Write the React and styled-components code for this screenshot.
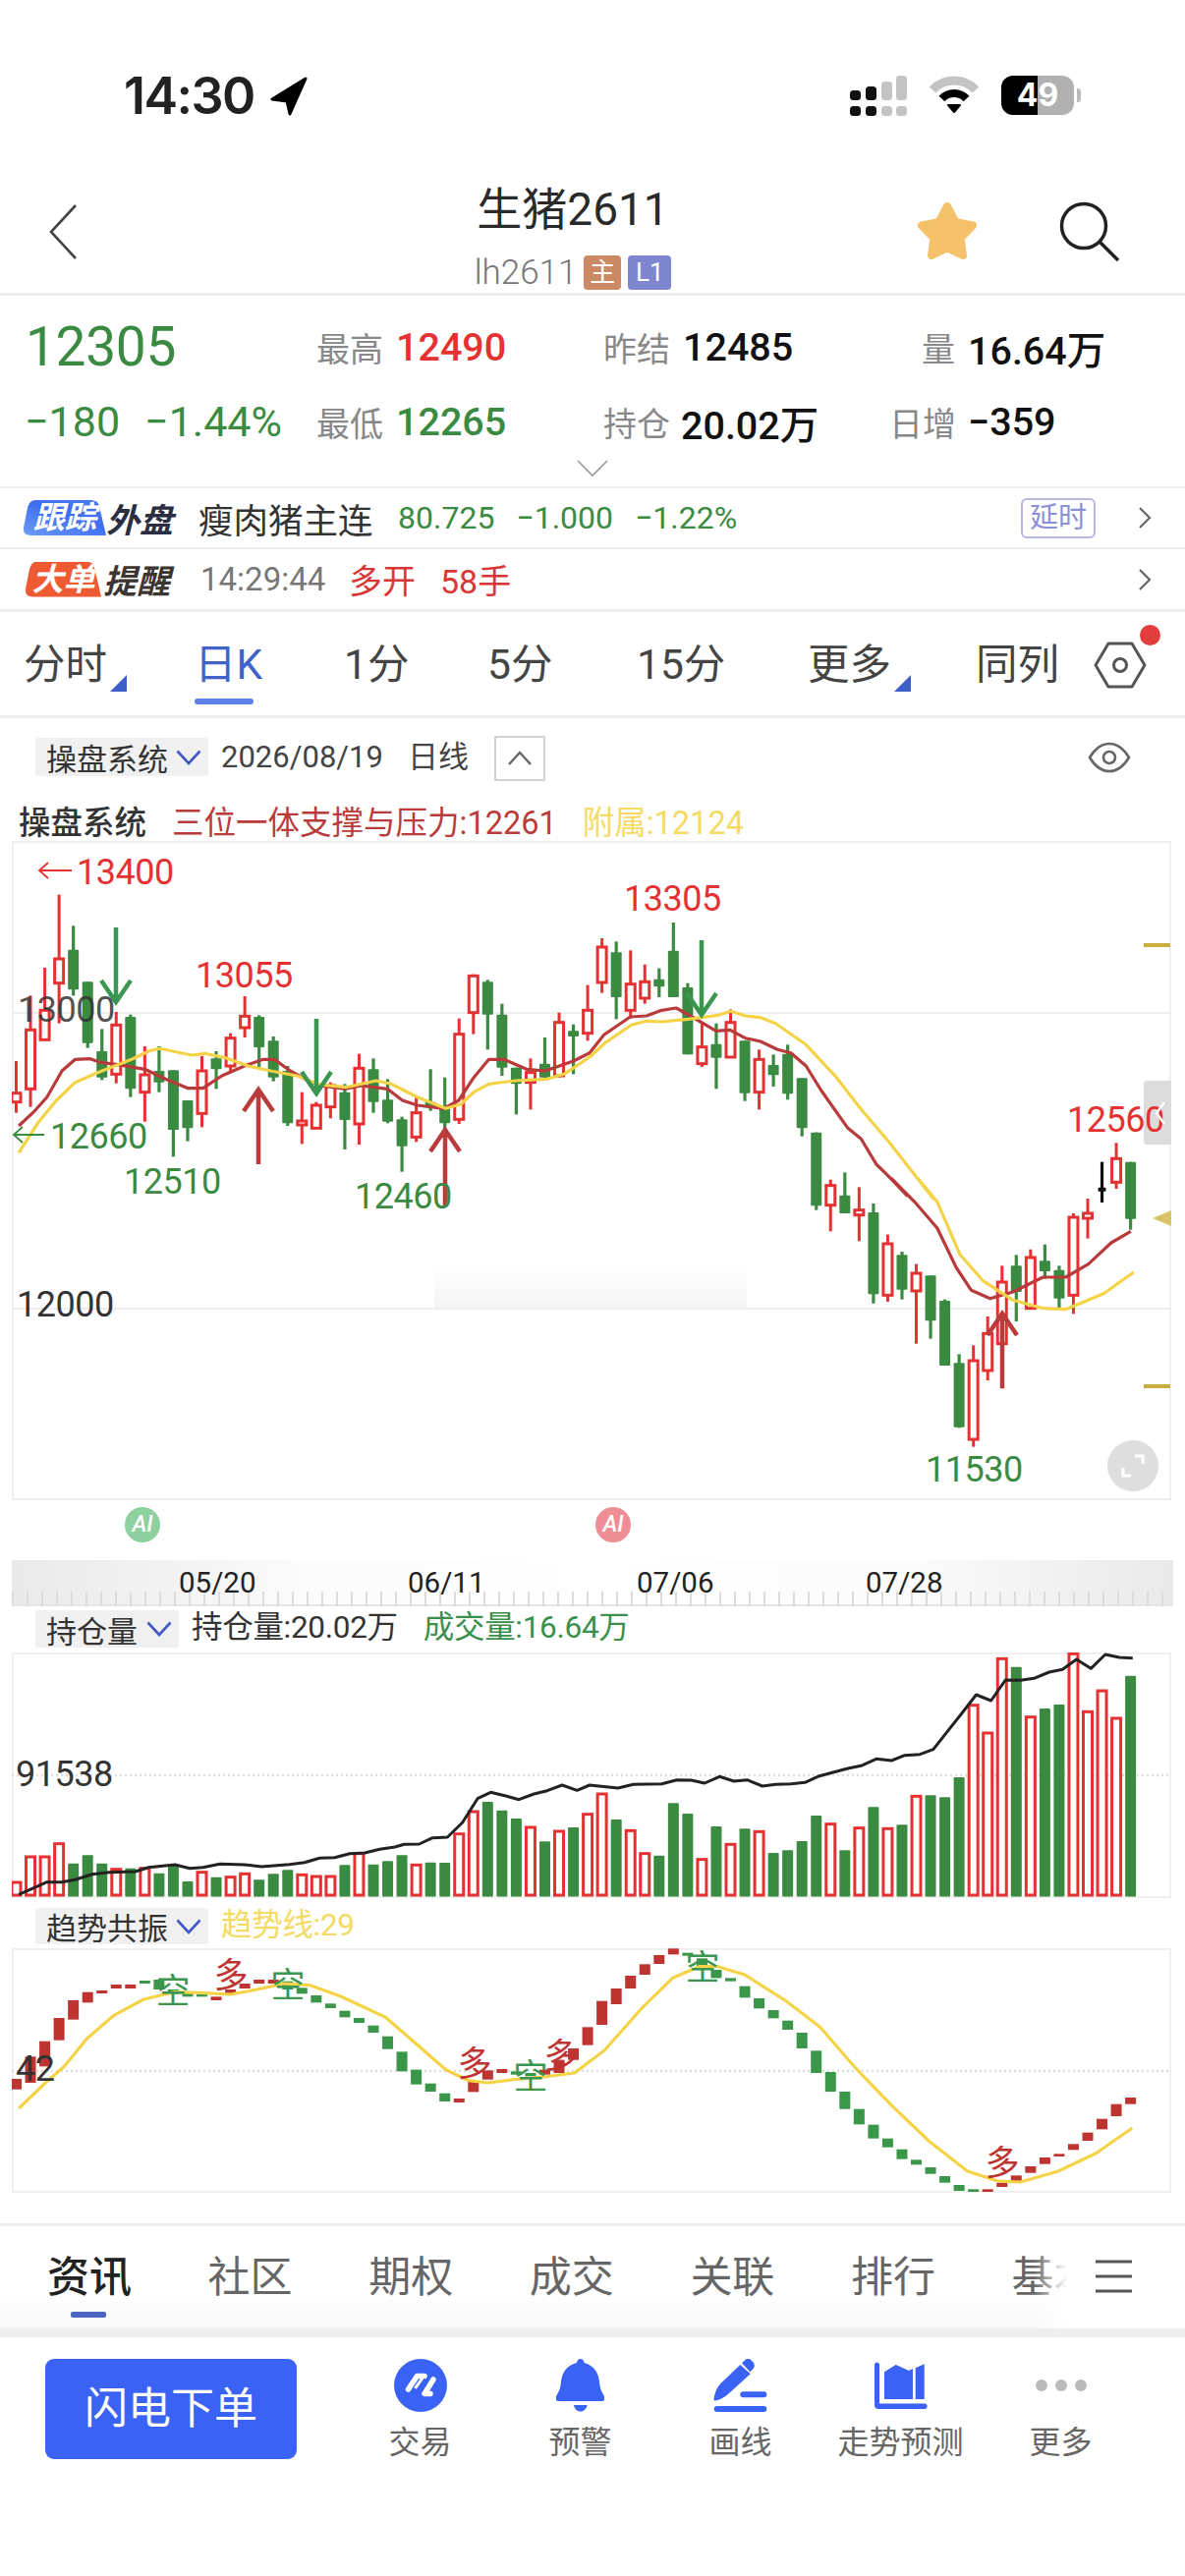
import React from "react";
import styled, { createGlobalStyle } from "styled-components";

const SANS = `Roboto, "Noto Sans CJK SC", "Liberation Sans", sans-serif`;
const RED = "#e53131";
const GREEN = "#3b8a42";
const BLUE = "#3a62f5";

const Global = createGlobalStyle`
  html, body { margin: 0; padding: 0; background: #fff; }
  body { font-family: ${SANS}; color: #222; }
  * { box-sizing: border-box; }
`;

const Page = styled.div`
  width: 1206px;
  height: 2622px;
  overflow: hidden;
  background: #fff;
  display: flex;
  flex-direction: column;
`;

/* ---------- status bar ---------- */
const StatusBar = styled.div`
  height: 140px;
  padding: 77px 0 0 126px;
  display: flex;
  align-items: flex-start;
`;
const Time = styled.div`
  font: 600 52px/42px Inter, ${SANS};
  letter-spacing: -1.6px;
  width: 149px;
`;
const LocationIcon = styled.svg`
  margin-top: 1px;
`;
const StatusRight = styled.div`
  margin-left: 552px;
  display: flex;
  align-items: flex-start;
  gap: 22px;
`;
const Battery = styled.div`
  position: relative;
  width: 74px;
  height: 40px;
  border-radius: 12px;
  background: linear-gradient(90deg, #000 0 37px, #b1b1b1 37px);
  color: #fff;
  font: 700 32px/40px Inter, ${SANS};
  text-align: center;
  &::after {
    content: "";
    position: absolute;
    right: -7px;
    top: 13px;
    width: 4px;
    height: 14px;
    border-radius: 0 3px 3px 0;
    background: #bbb;
  }
`;

/* ---------- nav ---------- */
const NavBar = styled.div`
  height: 161px;
  padding-top: 45px;
  display: grid;
  grid-template-columns: 433px 300px 1fr;
  border-bottom: 3px solid #eee;
`;
const NavLeft = styled.div`
  padding: 23px 0 0 50px;
`;
const NavCenter = styled.div`
  text-align: center;
`;
const Title = styled.div`
  font-size: 46px;
  line-height: 56px;
  color: #2a2a2a;
`;
const Sub = styled.div`
  margin-top: 16px;
  height: 40px;
  display: flex;
  align-items: center;
  justify-content: center;
  gap: 7px;
`;
const SubCode = styled.span`
  font-size: 35px;
  font-weight: 300;
  color: #777;
`;
const SubBadge = styled.span`
  width: ${(p) => p.$w}px;
  height: 35px;
  border-radius: 4px;
  background: ${(p) => p.$bg};
  color: #fff;
  font-size: 26px;
  line-height: 35px;
  text-align: center;
`;
const NavRight = styled.div`
  padding: 20px 0 0 200px;
  display: flex;
  gap: 83px;
  align-items: flex-start;
`;

/* ---------- quote ---------- */
const Quote = styled.div`
  height: 196px;
  padding-top: 14px;
  border-bottom: 2px solid #f0f0f0;
`;
const QuoteRow = styled.div`
  height: ${(p) => p.$h}px;
  padding-left: 25px;
  display: grid;
  grid-template-columns: 295px 292px 293px 1fr;
  align-items: center;
`;
const Price = styled.div`
  font-size: 55px;
  line-height: 76px;
  color: ${GREEN};
  padding-left: 1px;
  letter-spacing: -0.3px;
`;
const Delta = styled.div`
  font-size: 43px;
  color: ${GREEN};
  display: flex;
  gap: 25px;
  white-space: nowrap;
`;
const Stat = styled.div`
  display: flex;
  align-items: center;
  gap: ${(p) => p.$gap ?? 13}px;
`;
const StatLabel = styled.span`
  font-size: 34px;
  color: #888;
  width: ${(p) => p.$w ?? 70}px;
  text-align: right;
  white-space: nowrap;
`;
const StatValue = styled.span`
  font-size: 39.5px;
  font-weight: 500;
  color: ${(p) => p.$c ?? "#111"};
  white-space: nowrap;
`;
const Fold = styled.div`
  display: flex;
  justify-content: center;
  margin-top: 1px;
`;

/* ---------- info rows ---------- */
const InfoRow = styled.div`
  position: relative;
  height: ${(p) => p.$h ?? 62}px;
  display: flex;
  align-items: center;
  padding-left: 24px;
  border-bottom: ${(p) => p.$b ?? 2}px solid #eee;
`;
const Tag = styled.span`
  width: ${(p) => p.$w}px;
  height: 36px;
  margin-left: ${(p) => p.$m ?? 0}px;
  font-size: 32px;
  font-weight: 700;
  line-height: 36px;
  color: #fff;
  text-align: center;
  white-space: nowrap;
  font-style: italic;
  background: ${(p) => p.$bg};
  clip-path: path("M12 0H${(p) => p.$w - 16}Q${(p) => p.$w - 8} 0 ${(p) => p.$w - 7} 6L${(p) => p.$w} 36H8Q-1 36 0 28L4 8Q6 0 12 0Z");
`;
const TagText = styled.span`
  margin-left: ${(p) => p.$m ?? 0}px;
  font-size: 34px;
  font-weight: 700;
  font-style: italic;
  color: ${(p) => p.$c};
  width: ${(p) => p.$w}px;
  white-space: nowrap;
`;
const InfoName = styled.span`
  margin-left: 25px;
  font-size: 35.5px;
  color: #333;
  width: 203px;
  white-space: nowrap;
`;
const InfoNums = styled.span`
  font-size: 32px;
  color: ${GREEN};
  display: flex;
  gap: 22px;
  white-space: nowrap;
`;
const DelayBox = styled.span`
  position: absolute;
  left: 1039px;
  width: 76px;
  height: 41px;
  border: 2px solid #b7b8e0;
  border-radius: 6px;
  color: #8c8fd6;
  font-size: 29px;
  line-height: 36px;
  text-align: center;
`;
const Chev = styled.svg`
  position: absolute;
  left: 1158px;
`;
const InfoTime = styled.span`
  margin-left: 29px;
  font-size: 33px;
  color: #777;
  width: 151px;
`;
const InfoRed = styled.span`
  font-size: 34px;
  color: #d93636;
  width: ${(p) => p.$w}px;
  white-space: nowrap;
`;

/* ---------- period tabs ---------- */
const Periods = styled.div`
  height: 108px;
  padding: 27px 0 0 24px;
  display: grid;
  grid-template-columns: 174px 152px 146px 152px 174px 171px 120px 1fr;
  border-bottom: 3px solid #eee;
  position: relative;
`;
const Period = styled.div`
  position: relative;
  font-size: 42.5px;
  line-height: 54px;
  color: ${(p) => (p.$on ? "#3f63c9" : "#444")};
  white-space: nowrap;
`;
const Corner = styled.span`
  position: absolute;
  left: 88px;
  top: 37px;
  width: 17px;
  height: 17px;
  background: #3f5fc8;
  clip-path: polygon(100% 0, 100% 100%, 0 100%);
`;
const Underline = styled.span`
  position: absolute;
  left: 0;
  top: 61px;
  width: 60px;
  height: 6px;
  border-radius: 3px;
  background: #5b80ea;
`;
const HexIcon = styled.svg`
  margin-top: 3px;
`;
const Dot = styled.span`
  position: absolute;
  left: 1160px;
  top: 13px;
  width: 21px;
  height: 21px;
  border-radius: 50%;
  background: #e33d3d;
`;

/* ---------- chart heads ---------- */
const Toolbar = styled.div`
  height: 81px;
  padding: 20px 0 0 36px;
  display: flex;
  align-items: flex-start;
  position: relative;
`;
const Chip = styled.div`
  width: ${(p) => p.$w}px;
  height: ${(p) => p.$h ?? 39}px;
  background: #f0f0f0;
  border-radius: 3px;
  display: flex;
  align-items: center;
  justify-content: space-between;
  padding: 0 7px 0 11px;
  font-size: 31px;
  color: #333;
  white-space: nowrap;
  flex: none;
`;
const ToolDate = styled.span`
  margin-left: 13px;
  font-size: 31px;
  line-height: 39px;
  color: #444;
  width: 190px;
`;
const ToolKind = styled.span`
  font-size: 31px;
  line-height: 39px;
  color: #444;
  width: 88px;
`;
const Toggle = styled.div`
  width: 52px;
  height: 46px;
  margin-top: -2px;
  border: 2px solid #d2d2d2;
  display: flex;
  align-items: center;
  justify-content: center;
`;
const Eye = styled.svg`
  position: absolute;
  left: 1107px;
  top: 24px;
`;
const Legend = styled.div`
  height: 44px;
  padding-left: 19px;
  display: flex;
  align-items: center;
  font-size: 32.5px;
  white-space: nowrap;
`;
const LegendItem = styled.span`
  color: ${(p) => p.$c ?? "#333"};
  font-weight: ${(p) => p.$b ?? 400};
  margin-right: ${(p) => p.$gap ?? 26}px;
`;

/* ---------- chart frames ---------- */
const Frame = styled.div`
  position: relative;
  margin-left: 12px;
  width: 1180px;
  height: ${(p) => p.$h}px;
  box-shadow: inset 0 0 0 2px #f0f0f0;
  overflow: hidden;
  flex: none;
`;
const ChartSvg = styled.svg`
  position: relative;
  display: block;
  text { font-family: ${SANS}; }
`;
const Handle = styled.div`
  position: absolute;
  left: 1152px;
  top: 244px;
  width: 29px;
  height: 65px;
  background: #dcdcdc;
  border-radius: 3px;
`;
const Expand = styled.div`
  position: absolute;
  left: 1115px;
  top: 610px;
  width: 52px;
  height: 52px;
  border-radius: 50%;
  background: #dedede;
  display: flex;
  align-items: center;
  justify-content: center;
`;
const AiRow = styled.div`
  position: relative;
  height: 61px;
  flex: none;
`;
const AiBadge = styled.span`
  position: absolute;
  left: ${(p) => p.$x}px;
  top: 7px;
  width: 36px;
  height: 36px;
  border-radius: 50%;
  background: ${(p) => p.$bg};
  color: #fff;
  font: italic 500 23px/36px ${SANS};
  text-align: center;
`;
const Axis = styled.div`
  margin-left: 12px;
  width: 1182px;
  height: 47px;
  padding: 8px 0 0 170px;
  display: flex;
  flex: none;
  background:
    repeating-linear-gradient(90deg, #dcdcdc 0 2px, transparent 2px 15px) 0 100% / 100% 15px no-repeat,
    linear-gradient(#e6e6e6, #e6e6e6) 0 100% / 100% 2px no-repeat,
    linear-gradient(90deg, #e9e9e9, #fbfbfb 25%, #fff 50%, #fbfbfb 78%, #e9e9e9);
`;
const AxisDate = styled.span`
  width: 233px;
  font-size: 29.5px;
  line-height: 30px;
  color: #222;
`;
const IndicatorHead = styled.div`
  height: ${(p) => p.$h}px;
  padding: ${(p) => p.$t}px 0 0 36px;
  display: flex;
  align-items: flex-start;
  flex: none;
  font-size: 31.5px;
  white-space: nowrap;
`;
const IndicatorText = styled.span`
  color: ${(p) => p.$c};
  margin-left: ${(p) => p.$m}px;
  line-height: ${(p) => p.$lh ?? 36}px;
  letter-spacing: -0.3px;
`;

/* ---------- bottom tabs ---------- */
const SectionTabs = styled.div`
  margin-top: 31px;
  height: 107px;
  flex: none;
  border-top: 3px solid #eee;
  padding: 23px 0 0 48px;
  display: flex;
  position: relative;
  background: linear-gradient(#fff 62%, #f8f8f8);
`;
const SectionTab = styled.span`
  width: 163.6px;
  flex: none;
  font-size: 43px;
  line-height: 58px;
  font-weight: ${(p) => (p.$on ? 500 : 400)};
  color: ${(p) => (p.$on ? "#222" : "#666")};
  position: relative;
`;
const TabMark = styled.span`
  position: absolute;
  left: 24px;
  top: 64px;
  width: 36px;
  height: 6px;
  border-radius: 2px;
  background: #4a66c0;
`;
const TabFade = styled.div`
  position: absolute;
  left: 1052px;
  top: 0;
  width: 154px;
  height: 100%;
  background: linear-gradient(90deg, rgba(255, 255, 255, 0), #fff 22%);
`;
const MenuIcon = styled.svg`
  position: absolute;
  left: 1115px;
  top: 34px;
`;
const ShadowBar = styled.div`
  height: 9px;
  background: #eeeeee;
  flex: none;
`;
const BottomBar = styled.div`
  flex: 1;
  padding: 22px 0 0 46px;
  display: flex;
  align-items: flex-start;
`;
const TradeButton = styled.div`
  width: 256px;
  height: 102px;
  background: ${BLUE};
  border-radius: 9px;
  color: #fff;
  font-size: 44px;
  line-height: 102px;
  text-align: center;
  margin-right: 44px;
  flex: none;
`;
const BarItem = styled.div`
  width: 163px;
  flex: none;
  display: flex;
  flex-direction: column;
  align-items: center;
`;
const BarIcon = styled.svg`
  display: block;
`;
const BarLabel = styled.span`
  margin-top: 9px;
  font-size: 32px;
  line-height: 44px;
  color: #666;
  white-space: nowrap;
`;

/* ---------- data ---------- */
const cx = (i) => 16.5 + i * 14.54;

// [dir, high, top, bottom, low] in crop units; y = base + v / 3
const candlesA = [
  ["r",1080,1178,1205,1238],["r",880,985,1165,1220],["r",795,925,1015,1015],["r",572,768,842,965],
  ["g",667,740,862,880],["g",838,838,1025,1040],["g",982,1050,1130,1138],["r",930,970,1120,1148],
  ["g",938,945,1165,1190],["r",1035,1122,1175,1265],["g",1035,1110,1145,1175],["g",1108,1108,1290,1372],
  ["g",1200,1200,1285,1325],["r",1065,1110,1240,1282],["g",1050,1072,1105,1165],["r",995,1010,1095,1112],
  ["r",882,943,978,1008],["g",940,945,1038,1100],["g",1005,1018,1130,1142],["g",1095,1110,1270,1278],
  ["r",1175,1263,1275,1333],["r",1205,1215,1285,1285],["r",1145,1155,1220,1255],["g",1150,1175,1260,1350],
  ["r",1058,1102,1272,1335],["g",1072,1105,1205,1238],["g",1135,1198,1265,1270],["g",1250,1258,1340,1418],
  ["r",1190,1238,1312,1327],["g",1105,1205,1222,1232],["g",1130,1225,1270,1310],["r",950,998,1258,1272],
  ["r",815,820,932,998],["g",832,838,938,1045],["g",905,938,1100,1125],["g",1100,1100,1150,1243],
  ["r",1072,1115,1145,1228],["g",1008,1088,1130,1130],["r",932,962,1125,1130],["g",968,988,1005,1120],
  ["r",848,925,995,1018],
  ["r",705,732,840,872],["g",715,748,885,952],["r",742,845,925,950],["r",785,838,888,905],
  ["g",797,830,853,885],["g",657,743,885,885],["g",842,855,1060,1060],["r",960,1037,1088,1098],
  ["g",965,1028,1070,1165],["r",922,962,1068,1070],["g",1018,1018,1178,1202],["r",1045,1075,1175,1228],
  ["g",1060,1092,1123,1158],["g",1030,1058,1180,1198],["g",1132,1132,1285,1310],
];
const candlesB = [
  ["g",-142,-142,82,95],["r",2,20,80,160],["g",-20,50,105,105],["r",25,95,110,190],
  ["g",75,102,352,380],["r",170,198,355,375],["g",222,232,338,368],["r",260,288,342,503],
  ["g",295,295,433,488],["g",368,372,570,570],["g",535,562,758,760],["r",508,555,795,818],
  ["r",420,472,585,615],["r",265,315,503,640],["g",232,265,345,435],["r",215,240,395,398],
  ["g",200,250,282,305],["g",265,278,365,400],["r",105,117,355,412],["r",60,105,120,182],
  ["k",-52,26,38,72],["r",-110,-62,10,30],["g",-52,-52,122,155],
];
const candles = [
  ...candlesA.map((c) => [c[0], ...c.slice(1).map((v) => 720 + v / 3)]),
  ...candlesB.map((c) => [c[0], ...c.slice(1).map((v) => 1200 + v / 3)]),
];

const toPath = (pts) => pts.map(([x, y], i) => `${i ? "L" : "M"}${x.toFixed(1)} ${y.toFixed(1)}`).join("");
const z3 = (p) => p.map(([x, y]) => [x / 2.613, 720 + y / 3]);
const z4 = (p) => p.map(([x, y]) => [600 + x / 2.587, 720 + y / 3]);
const z5 = (p) => p.map(([x, y]) => [x / 1.3, 1200 + y / 3]);

const maRed = [
  ...z3([[50,1278],[90,1235],[125,1190],[165,1110],[200,1075],[240,1073],[270,1085],[310,1090],[385,1105],[440,1135],[500,1163],[540,1163],[590,1125],[650,1095],[700,1075],[730,1075],[765,1105],[803,1130],[850,1155],[920,1165],[960,1155],[1030,1165],[1070,1200],[1110,1215],[1180,1225],[1220,1200],[1260,1130],[1300,1075],[1340,1075],[1400,1105],[1450,1110],[1525,1080]]),
  ...z4([[0,1055],[38,1000],[107,945],[150,942],[190,925],[228,918],[270,945],[333,988],[370,985],[410,1010],[450,1020],[495,1045],[530,1055],[570,1095],[610,1170],[680,1285],[715,1318],[755,1395],[790,1435],[835,1490]]),
  ...z5([[1180,0],[1210,70],[1240,150],[1265,270],[1285,340],[1310,365],[1340,345],[1380,300],[1410,300],[1440,260],[1470,195],[1496,160]]),
];
const maYellow = [
  ...z3([[50,1360],[100,1270],[150,1200],[200,1145],[260,1115],[350,1075],[400,1048],[425,1042],[510,1062],[545,1057],[600,1070],[660,1095],[720,1110],[790,1125],[850,1152],[920,1160],[1000,1140],[1040,1150],[1110,1190],[1185,1225],[1225,1212],[1260,1175],[1300,1150],[1370,1140],[1455,1135],[1500,1120]]),
  ...z4([[0,1068],[40,1025],[110,970],[150,958],[190,960],[260,952],[340,940],[372,928],[410,942],[450,947],[490,965],[570,1030],[650,1130],[710,1220],[790,1330],[905,1500]]),
  ...z5([[1215,0],[1240,70],[1270,230],[1300,310],[1340,370],[1380,395],[1410,398],[1460,350],[1500,285]]),
];

const bars = [
  ["r",828],["r",750],["r",750],["r",710],["g",770],["g",745],["g",770],["r",788],["g",785],["r",785],["g",800],["g",775],["g",825],["r",797],["g",812],["r",812],["r",802],["g",820],["g",802],["g",790],["r",805],["r",810],["r",810],["g",775],["r",740],["g",773],["g",763],["g",745],["r",775],["g",767],["g",768],["r",680],["r",612],["g",582],["g",608],["g",633],["r",660],["g",703],["r",672],["g",660],["r",620],
  ["r",558],["g",636],["r",670],["r",740],["g",746],["g",586],["g",618],["r",758],["g",657],["r",712],["g",664],["r",673],["g",738],["g",730],["g",702],["g",624],["r",650],["g",730],["r",662],["g",598],["r",664],["g",652],["r",565],["g",562],["g",568],["g",507],["r",287],["r",372],["r",145],["g",170],["r",323],["g",297],["g",285],["r",130],["r",307],["r",243],["r",327],["g",197],
];
const holdLine = [
  ...[[50,865],[90,845],[125,827],[165,827],[200,820],[245,803],[290,797],[360,795],[395,782],[465,774],[505,785],[540,782],[585,772],[650,774],[695,780],[770,773],[810,767],[850,754],[890,752],[930,740],[970,738],[1010,727],[1050,720],[1075,712],[1115,711],[1150,692],[1190,690],[1230,645],[1270,572],[1305,553],[1345,564],[1380,575],[1420,558],[1455,548],[1495,531],[1535,547]].map(([x, y]) => [x / 2.613, 1640 + y / 3]),
  ...[[0,531],[75,540],[115,529],[190,527],[230,515],[268,516],[303,525],[342,505],[380,519],[415,515],[455,534],[490,529],[530,527],[567,523],[605,503],[680,480],[715,472],[755,451],[795,456],[830,440],[870,437],[905,422],[940,370],[980,312],[1018,255],[1057,273],[1095,210],[1135,211],[1170,205],[1210,186],[1245,178],[1282,147],[1320,175],[1358,132],[1395,141],[1430,143]].map(([x, y]) => [600 + x / 2.587, 1640 + y / 3]),
];
const trend = [
  ["r",558,590],["r",490,570],["r",443,520],["r",372,440],["r",318,377],["r",293,325],["r",288,297],["r",270,282],["r",270,282],["g",258,267],["g",255,285],["g",285,300],["g",297,307],["g",300,307],["r",307,318],["r",285,297],["r",267,282],["r",255,267],["r",255,267],["g",260,285],["g",280,298],["g",303,325],["g",328,342],["g",350,370],["g",372,387],["g",395,417],["g",428,467],["g",475,535],["g",530,575],["g",572,597],["g",602,627],["r",618,630],["r",565,598],["r",532,560],["r",528,540],["g",535,545],["g",540,550],["r",530,545],["r",500,540],["r",465,500],["r",400,455],["r",320,393],["r",282,330],["r",243,282],["r",208,240],["r",180,207],["r",160,178],["g",173,182],["g",190,220],["g",225,250],["g",250,260],["g",275,310],["g",312,343],["g",348,373],["g",380,408],["g",417,465],["g",472,540],["g",537,597],["g",597,650],["g",650,697],["g",698,740],["g",740,767],["g",773,803],["g",805,820],["g",828,848],["g",855,875],["g",882,900],["g",895,903],["r",895,903],["r",875,888],["r",853,870],["r",825,845],["r",798,818],["r",787,795],["r",757,775],["r",722,747],["r",680,712],["r",635,672],["r",615,635],
];
const trendLine = [[25,648],[60,570],[85,520],[115,435],[150,365],[190,315],[230,293],[265,295],[305,300],[340,285],[375,267],[410,272],[450,305],[510,370],[550,450],[590,530],[620,563],[645,570],[680,560],[720,552],[760,540],[800,470],[850,340],[890,250],[925,215],[950,215],[985,240],[1040,320],[1085,400],[1130,520],[1180,640],[1230,750],[1280,840],[1320,870],[1350,873],[1400,840],[1450,785],[1498,708]].map(([x, y]) => [x / 1.3, 1930 + y / 3]);
const trendMarks = [
  ["空",176,2027],["多",235,2011],["空",293,2021],["多",483,2101],["空",540,2114],["多",571,2093],["空",715,2003],["多",1020,2202],
];

/* ---------- chart pieces ---------- */
const Candle = ({ i, c }) => {
  const [d, hi, top, bot, lo] = c;
  const x = cx(i);
  const col = d === "r" ? RED : d === "g" ? GREEN : "#111";
  if (d === "r") {
    return (
      <g stroke={col} strokeWidth="3" fill="#fff">
        <line x1={x} x2={x} y1={hi} y2={top} />
        <line x1={x} x2={x} y1={bot} y2={lo} />
        <rect x={x - 4.5} y={top} width="9" height={Math.max(bot - top, 2)} />
      </g>
    );
  }
  return (
    <g fill={col}>
      <rect x={x - 1.6} y={hi} width="3.2" height={lo - hi} />
      <rect x={x - (d === "k" ? 4 : 5.5)} y={top} width={d === "k" ? 8 : 11} height={bot - top} rx="1" />
    </g>
  );
};

const Arrow = ({ x, tip, end, up, col, head = 22 }) => {
  const s = up ? 1 : -1;
  return (
    <path
      d={`M${x} ${end}L${x} ${tip}M${x - 15} ${tip + s * head}L${x} ${tip}L${x + 15} ${tip + s * head}`}
      stroke={col}
      strokeWidth="4.5"
      fill="none"
    />
  );
};

const ThinArrow = ({ x1, x2, y, col }) => (
  <path d={`M${x2} ${y}L${x1} ${y}M${x1 + 9} ${y - 8}L${x1} ${y}L${x1 + 9} ${y + 8}`} stroke={col} strokeWidth="1.8" fill="none" />
);

const Num = ({ x, y, c, o, size = 36, children }) => (
  <text x={x} y={y} fill={c} fillOpacity={o ?? 1} fontSize={size} letterSpacing="-0.5">{children}</text>
);

const ChipChevron = () => (
  <svg width="26" height="16" viewBox="0 0 26 16">
    <path d="M1.5 1.5L13 14L24.5 1.5" fill="none" stroke="#4458c8" strokeWidth="2.6" />
  </svg>
);

const RowChevron = () => (
  <Chev width="14" height="22" viewBox="0 0 14 22">
    <path d="M2 1L12 11L2 21" fill="none" stroke="#666" strokeWidth="2.2" />
  </Chev>
);

const KChart = () => (
  <ChartSvg width="1180" height="671" viewBox="12 856 1180 671">
    <defs>
      <linearGradient id="smudge" x1="0" y1="0" x2="0" y2="1">
        <stop offset="0" stopColor="#f4f4f4" stopOpacity="0" />
        <stop offset="1" stopColor="#f3f3f3" />
      </linearGradient>
    </defs>
    <rect x="442" y="1290" width="318" height="42" fill="url(#smudge)" />
    <rect x="12" y="1030" width="1180" height="2" fill="#eee" />
    <rect x="12" y="1331" width="1180" height="2" fill="#eee" />
    <rect x="1164" y="960" width="27" height="4" fill="#c9ae3f" />
    <rect x="1164" y="1409" width="27" height="4" fill="#c9ae3f" />
    <polygon points="1173,1240 1192,1232 1192,1248" fill="#d8c26a" />
    {candles.map((c, i) => <Candle key={i} i={i} c={c} />)}
    <path d={toPath(maRed)} fill="none" stroke="#b83a3a" strokeWidth="3.2" strokeLinejoin="round" />
    <path d={toPath(maYellow)} fill="none" stroke="#f4d347" strokeWidth="3.2" strokeLinejoin="round" />
    <Arrow x={118} tip={1020} end={944} col="#3a9650" />
    <Arrow x={322} tip={1113} end={1037} col="#3a9650" />
    <Arrow x={714} tip={1033} end={957} col="#3a9650" />
    <Arrow x={263} tip={1109} end={1185} up col="#b93b3b" />
    <Arrow x={453} tip={1150} end={1227} up col="#b93b3b" />
    <Arrow x={1020} tip={1337} end={1413} up col="#b93b3b" />
    <ThinArrow x1={40} x2={73} y={886} col={RED} />
    <Num x={78} y={900} c={RED}>13400</Num>
    <Num x={199} y={1005} c={RED}>13055</Num>
    <Num x={635} y={927} c={RED}>13305</Num>
    <Num x={1086} y={1152} c={RED}>12560</Num>
    <path d="M1185 1122L1177 1133L1185 1144" fill="none" stroke="#fff" strokeWidth="2.4" />
    <ThinArrow x1={14} x2={45} y={1155} col={GREEN} />
    <Num x={51} y={1169} c={GREEN}>12660</Num>
    <Num x={126} y={1215} c={GREEN}>12510</Num>
    <Num x={361} y={1230} c={GREEN}>12460</Num>
    <Num x={942} y={1508} c={GREEN}>11530</Num>
    <Num x={18} y={1040} c="#333" o={0.85}>13000</Num>
    <Num x={17} y={1340} c="#333">12000</Num>
  </ChartSvg>
);

const HoldChart = () => (
  <ChartSvg width="1180" height="250" viewBox="12 1682 1180 250">
    <line x1="12" x2="1192" y1="1807" y2="1807" stroke="#ddd" strokeWidth="2.5" strokeDasharray="2 3" />
    {bars.map(([d, t], i) => {
      const x = cx(i);
      const y = 1640 + t / 3;
      return d === "r" ? (
        <rect key={i} x={x - 4.5} y={y} width="9" height={1929 - y} fill="#fff" stroke={RED} strokeWidth="3" />
      ) : (
        <rect key={i} x={x - 5.5} y={y} width="11" height={1930.5 - y} fill={GREEN} rx="1" />
      );
    })}
    <path d={toPath(holdLine)} fill="none" stroke="#222" strokeWidth="3" strokeLinejoin="round" />
    <Num x={16} y={1818} c="#333">91538</Num>
  </ChartSvg>
);

const TrendChart = () => (
  <ChartSvg width="1180" height="249" viewBox="12 1983 1180 249">
    <line x1="12" x2="1192" y1="2108" y2="2108" stroke="#ddd" strokeWidth="2.5" strokeDasharray="2 3" />
    {trend.map(([d, t, b], i) => (
      <rect key={i} x={cx(i) - 5.5} y={1930 + t / 3} width="11" height={(b - t) / 3} fill={d === "r" ? "#bd3430" : "#3a9648"} />
    ))}
    <path d={toPath(trendLine)} fill="none" stroke="#f4d347" strokeWidth="3.2" strokeLinejoin="round" />
    {trendMarks.map(([m, x, y], i) => (
      <text key={i} x={x} y={y + 12} textAnchor="middle" fontSize="35" fill={m === "多" ? "#bd3430" : "#3a9650"}>{m}</text>
    ))}
    <Num x={16} y={2118} c="#333">42</Num>
  </ChartSvg>
);

/* ---------- App ---------- */
export default function App() {
  return (
    <Page>
      <Global />
      <StatusBar>
        <Time>14:30</Time>
        <LocationIcon width="38" height="40" viewBox="0 0 38 40">
          <path d="M36 2L2 23L17 25L20 38Z" fill="#000" stroke="#000" strokeWidth="3" strokeLinejoin="round" />
        </LocationIcon>
        <StatusRight>
          <svg width="58" height="41" viewBox="865 77 58 41">
            <g fill="#111">
              <rect x="865" y="92" width="11" height="10" rx="3.5" />
              <rect x="881" y="88" width="11" height="14" rx="3.5" />
              <rect x="865" y="108" width="11" height="10" rx="3.5" />
              <rect x="881" y="108" width="11" height="10" rx="3.5" />
            </g>
            <g fill="#c4c4c4">
              <rect x="897" y="83" width="11" height="19" rx="3.5" />
              <rect x="912" y="77" width="11" height="25" rx="3.5" />
              <rect x="897" y="108" width="11" height="10" rx="3.5" />
              <rect x="912" y="108" width="11" height="10" rx="3.5" />
            </g>
          </svg>
          <svg width="52" height="40" viewBox="945 78 52 40">
            <path d="M949 92.5A30 30 0 0 1 993 92.5" fill="none" stroke="#c4c4c4" strokeWidth="9" />
            <path d="M958.5 101.5A17 17 0 0 1 983.5 101.5" fill="none" stroke="#000" strokeWidth="8" />
            <path d="M965 108L977 108L971 115Z" fill="#000" stroke="#000" strokeWidth="2" strokeLinejoin="round" />
          </svg>
          <Battery>49</Battery>
        </StatusRight>
      </StatusBar>

      <NavBar>
        <NavLeft>
          <svg width="30" height="56" viewBox="0 0 30 56">
            <path d="M27 1L2 28L27 55" fill="none" stroke="#444" strokeWidth="2.6" />
          </svg>
        </NavLeft>
        <NavCenter>
          <Title>生猪2611</Title>
          <Sub>
            <SubCode>lh2611</SubCode>
            <SubBadge $w={38} $bg="#cb8a63">主</SubBadge>
            <SubBadge $w={44} $bg="#7f85cf">L1</SubBadge>
          </Sub>
        </NavCenter>
        <NavRight>
          <svg width="62" height="60" viewBox="0 0 62 60">
            <path d="M31 5L39.5 21L57 24.5L44.5 37.5L47 55L31 47.5L15 55L17.5 37.5L5 24.5L22.5 21Z" fill="#f5c26b" stroke="#f5c26b" strokeWidth="8" strokeLinejoin="round" />
          </svg>
          <svg width="62" height="62" viewBox="0 0 62 62">
            <circle cx="25" cy="25" r="22.5" fill="none" stroke="#222" strokeWidth="3.5" />
            <path d="M41 41L60 60" stroke="#222" strokeWidth="3.5" />
          </svg>
        </NavRight>
      </NavBar>

      <Quote>
        <QuoteRow $h={76}>
          <Price>12305</Price>
          <Stat><StatLabel>最高</StatLabel><StatValue $c={RED}>12490</StatValue></Stat>
          <Stat><StatLabel>昨结</StatLabel><StatValue>12485</StatValue></Stat>
          <Stat><StatLabel $w={67}>量</StatLabel><StatValue>16.64万</StatValue></Stat>
        </QuoteRow>
        <QuoteRow $h={76}>
          <Delta><span>−180</span><span>−1.44%</span></Delta>
          <Stat><StatLabel>最低</StatLabel><StatValue $c={GREEN}>12265</StatValue></Stat>
          <Stat $gap={11}><StatLabel>持仓</StatLabel><StatValue>20.02万</StatValue></Stat>
          <Stat><StatLabel $w={67}>日增</StatLabel><StatValue>−359</StatValue></Stat>
        </QuoteRow>
        <Fold>
          <svg width="32" height="18" viewBox="0 0 32 18">
            <path d="M1 1L16 16L31 1" fill="none" stroke="#999" strokeWidth="1.6" />
          </svg>
        </Fold>
      </Quote>

      <InfoRow>
        <Tag $w={84} $bg="linear-gradient(20deg,#6d9bf5,#3f6ff0 55%,#4a7af0)">跟踪</Tag>
        <TagText $w={69} $c="#2b2d40">外盘</TagText>
        <InfoName>瘦肉猪主连</InfoName>
        <InfoNums><span>80.725</span><span>−1.000</span><span>−1.22%</span></InfoNums>
        <DelayBox>延时</DelayBox>
        <RowChevron />
      </InfoRow>
      <InfoRow $h={64} $b={3}>
        <Tag $w={77} $m={2} $bg="#ee5a32">大单</Tag>
        <TagText $w={70} $m={2} $c="#3d3530">提醒</TagText>
        <InfoTime>14:29:44</InfoTime>
        <InfoRed $w={93}>多开</InfoRed>
        <InfoRed $w={90}>58手</InfoRed>
        <RowChevron />
      </InfoRow>

      <Periods>
        <Period>分时<Corner /></Period>
        <Period $on>日K<Underline /></Period>
        <Period>1分</Period>
        <Period>5分</Period>
        <Period>15分</Period>
        <Period>更多<Corner /></Period>
        <Period>同列</Period>
        <HexIcon width="54" height="48" viewBox="0 0 54 48">
          <path d="M2 24L15 2H39L52 24L39 46H15Z" fill="none" stroke="#555" strokeWidth="3" strokeLinejoin="round" />
          <circle cx="27" cy="24" r="6.5" fill="none" stroke="#555" strokeWidth="3" />
        </HexIcon>
        <Dot />
      </Periods>

      <Toolbar>
        <Chip $w={176}>操盘系统<ChipChevron /></Chip>
        <ToolDate>2026/08/19</ToolDate>
        <ToolKind>日线</ToolKind>
        <Toggle>
          <svg width="26" height="16" viewBox="0 0 26 16">
            <path d="M2 14L13 2L24 14" fill="none" stroke="#666" strokeWidth="2.4" />
          </svg>
        </Toggle>
        <Eye width="44" height="32" viewBox="0 0 44 32">
          <path d="M2 16C8 6 15 2 22 2S36 6 42 16C36 26 29 30 22 30S8 26 2 16Z" fill="none" stroke="#666" strokeWidth="2.6" />
          <circle cx="22" cy="16" r="6" fill="none" stroke="#666" strokeWidth="2.6" />
        </Eye>
      </Toolbar>
      <Legend>
        <LegendItem $b={500}>操盘系统</LegendItem>
        <LegendItem $c="#b93b3b">三位一体支撑与压力:12261</LegendItem>
        <LegendItem $c="#f5da63">附属:12124</LegendItem>
      </Legend>

      <Frame $h={671}>
        <Handle />
        <KChart />
        <Expand>
          <svg width="24" height="24" viewBox="0 0 24 24">
            <path d="M14 2H22V10M10 22H2V14" fill="none" stroke="#fff" strokeWidth="3" />
          </svg>
        </Expand>
      </Frame>
      <AiRow>
        <AiBadge $x={127} $bg="#8ed0a0">AI</AiBadge>
        <AiBadge $x={606} $bg="#ee8e94">AI</AiBadge>
      </AiRow>
      <Axis>
        <AxisDate>05/20</AxisDate>
        <AxisDate>06/11</AxisDate>
        <AxisDate>07/06</AxisDate>
        <AxisDate>07/28</AxisDate>
      </Axis>

      <IndicatorHead $h={47} $t={4}>
        <Chip $w={146} $h={38}>持仓量<ChipChevron /></Chip>
        <IndicatorText $c="#333" $m={13}>持仓量:20.02万</IndicatorText>
        <IndicatorText $c="#3b8f4c" $m={26}>成交量:16.64万</IndicatorText>
      </IndicatorHead>
      <Frame $h={250}><HoldChart /></Frame>

      <IndicatorHead $h={51} $t={10}>
        <Chip $w={176} $h={37}>趋势共振<ChipChevron /></Chip>
        <IndicatorText $c="#f5da63" $m={13}>趋势线:29</IndicatorText>
      </IndicatorHead>
      <Frame $h={249}><TrendChart /></Frame>

      <SectionTabs>
        <SectionTab $on>资讯<TabMark /></SectionTab>
        <SectionTab>社区</SectionTab>
        <SectionTab>期权</SectionTab>
        <SectionTab>成交</SectionTab>
        <SectionTab>关联</SectionTab>
        <SectionTab>排行</SectionTab>
        <SectionTab>基本</SectionTab>
        <TabFade />
        <MenuIcon width="37" height="34" viewBox="0 0 37 34">
          <path d="M0 2H37M0 17H37M0 32H37" stroke="#555" strokeWidth="3" />
        </MenuIcon>
      </SectionTabs>
      <ShadowBar />

      <BottomBar>
        <TradeButton>闪电下单</TradeButton>
        <BarItem>
          <BarIcon width="54" height="54" viewBox="0 0 54 54">
            <circle cx="27" cy="27" r="27" fill={BLUE} />
            <path d="M31 17.5H23.5L14.5 31" stroke="#fff" strokeWidth="5.5" strokeLinecap="round" strokeLinejoin="round" fill="none" />
            <path d="M30 18L21.5 30" stroke="#fff" strokeWidth="3" fill="none" />
            <path d="M40 21L31 35.5H37" stroke="#fff" strokeWidth="5.5" strokeLinecap="round" strokeLinejoin="round" fill="none" />
          </BarIcon>
          <BarLabel>交易</BarLabel>
        </BarItem>
        <BarItem>
          <BarIcon width="49" height="54" viewBox="0 0 49 54">
            <path d="M24.7 0C27 0 28.5 2 28.5 4C37 6 43 13 44 23C44.5 30 46 33 49 38C50 41 49 43 46 43H3C0 43 -1 41 0 38C3 33 4.5 30 5 23C6 13 12 6 21 4C21 2 22.5 0 24.7 0Z" fill={BLUE} />
            <path d="M18 47H31.5C31 51 28 53.5 24.7 53.5C21.5 53.5 18.5 51 18 47Z" fill={BLUE} />
          </BarIcon>
          <BarLabel>预警</BarLabel>
        </BarItem>
        <BarItem>
          <BarIcon width="55" height="54" viewBox="0 0 55 54">
            <path d="M29 4.3L33 0.5C35 -0.5 37 0 38 1L41 4C42 6 42 8 41 9.5L37.3 13.3Z" fill={BLUE} />
            <path d="M27.3 6L37.7 15.3L16 35C11 39.5 6 42 2 42.5C1 42.5 0.5 42 0.5 41C1 36 3 30 7 25.5Z" fill={BLUE} />
            <rect x="27.3" y="33.3" width="27" height="6" rx="3" fill={BLUE} />
            <rect x="0.7" y="48" width="53.6" height="6" rx="3" fill={BLUE} />
          </BarIcon>
          <BarLabel>画线</BarLabel>
        </BarItem>
        <BarItem>
          <BarIcon width="54" height="54" viewBox="0 0 54 54">
            <path d="M2.5 3.5C4 3.5 5 4.5 5 6V45.5H51C54.5 45.5 54.5 51 51 51H4C1.5 51 0 49.5 0 47V6C0 4.5 1 3.5 2.5 3.5Z" fill={BLUE} />
            <path d="M10 13.3L21.7 6L35 12L39 10V41H10Z" fill={BLUE} />
            <path d="M41.7 9.3L50.7 5.3V41H41.7Z" fill={BLUE} />
          </BarIcon>
          <BarLabel>走势预测</BarLabel>
        </BarItem>
        <BarItem>
          <BarIcon width="54" height="54" viewBox="0 0 54 54">
            <circle cx="7" cy="27" r="6" fill="#bbb" />
            <circle cx="27" cy="27" r="6" fill="#bbb" />
            <circle cx="47" cy="27" r="6" fill="#bbb" />
          </BarIcon>
          <BarLabel>更多</BarLabel>
        </BarItem>
      </BottomBar>
    </Page>
  );
}
